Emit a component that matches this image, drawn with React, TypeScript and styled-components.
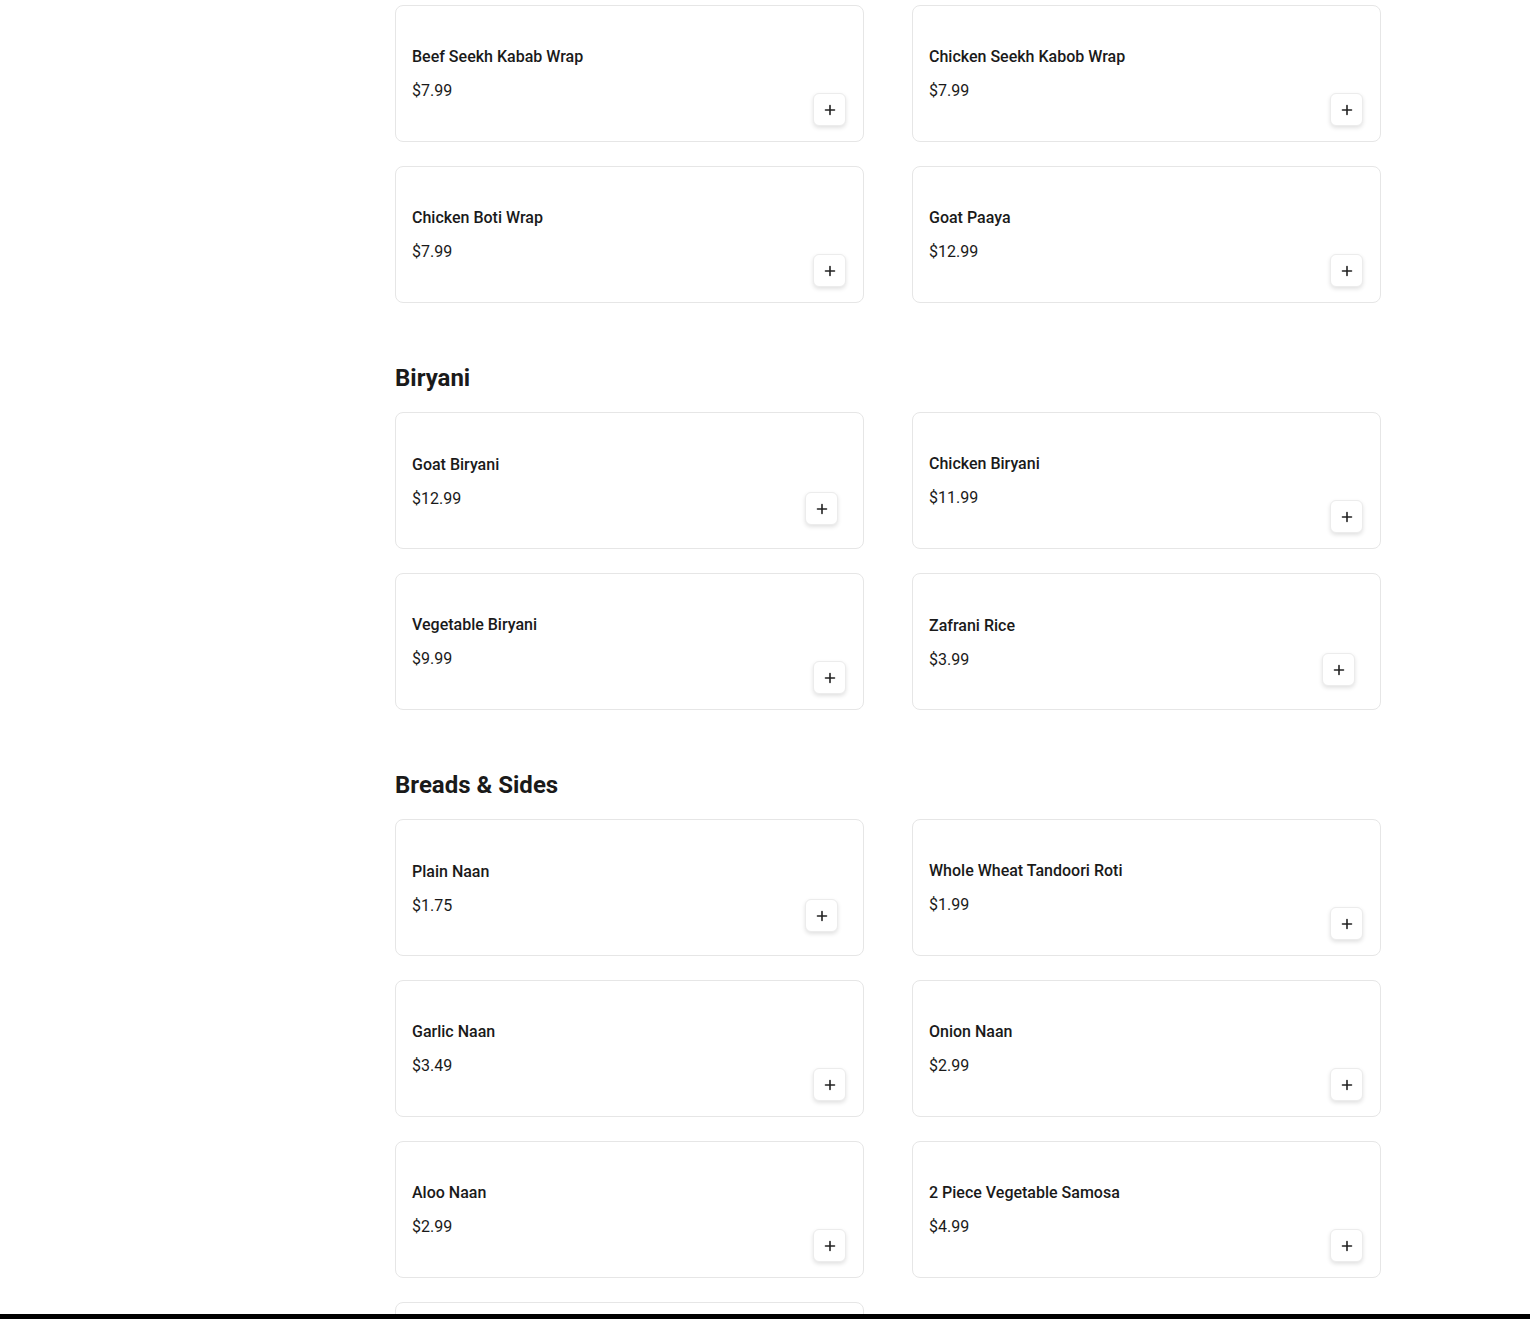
import React from "react";
import styled, { createGlobalStyle } from "styled-components";

const Global = createGlobalStyle`
  html, body { margin: 0; padding: 0; background: #fff; }
  body { font-family: Roboto, "Liberation Sans", Arial, sans-serif; color: #1a1a1a; }
  * { box-sizing: border-box; }
`;

const Page = styled.div`
  padding: 5px 0 0 395px;
  width: 1381px;
  height: 1319px;
  overflow: hidden;
`;

const Section = styled.section`
  display: flex;
  flex-direction: column;
  margin-bottom: 59px;
`;

const Heading = styled.h2`
  margin: 0 0 18px;
  font-size: 24px;
  line-height: 32px;
  font-weight: 700;
  color: #1a1a1a;
`;

const Grid = styled.div`
  display: grid;
  grid-template-columns: 469px 469px;
  column-gap: 48px;
  row-gap: 24px;
`;

const Card = styled.div`
  position: relative;
  height: 137px;
  border: 1px solid #e6e6e6;
  border-radius: 8px;
  background: #fff;
  padding: 0 17px 0 16px;
  display: flex;
  justify-content: space-between;
`;

const Info = styled.div<{ $shift?: boolean }>`
  display: flex;
  flex-direction: column;
  gap: 10px;
  padding-top: ${(p) => (p.$shift ? 40 : 39)}px;
`;

const Name = styled.div`
  font-size: 16px;
  line-height: 24px;
  font-weight: 500;
`;

const Price = styled.div`
  font-size: 16px;
  line-height: 24px;
  font-weight: 400;
`;

const AddButton = styled.button<{ $shift?: boolean }>`
  align-self: flex-end;
  margin-bottom: ${(p) => (p.$shift ? 23 : 15)}px;
  margin-right: ${(p) => (p.$shift ? 8 : 0)}px;
  width: 33px;
  height: 33px;
  border: 1px solid #ececec;
  border-radius: 6px;
  background: #fff;
  box-shadow: 0 2px 4px rgba(0, 0, 0, 0.12);
  display: flex;
  align-items: center;
  justify-content: center;
  padding: 0;
  cursor: pointer;
`;

const BottomBar = styled.div`
  position: fixed;
  left: 0;
  right: 0;
  bottom: 0;
  height: 5px;
  background: #000;
`;

const Plus = () => (
  <svg width="12" height="12" viewBox="0 0 12 12">
    <path d="M6 1.5v9M1.5 6h9" stroke="#222" strokeWidth="1.6" strokeLinecap="round" />
  </svg>
);

type Item = { name: string; price: string; shift?: boolean };

const wraps: Item[] = [
  { name: "Beef Seekh Kabab Wrap", price: "$7.99" },
  { name: "Chicken Seekh Kabob Wrap", price: "$7.99" },
  { name: "Chicken Boti Wrap", price: "$7.99" },
  { name: "Goat Paaya", price: "$12.99" },
];

const biryani: Item[] = [
  { name: "Goat Biryani", price: "$12.99", shift: true },
  { name: "Chicken Biryani", price: "$11.99" },
  { name: "Vegetable Biryani", price: "$9.99" },
  { name: "Zafrani Rice", price: "$3.99", shift: true },
];

const breads: Item[] = [
  { name: "Plain Naan", price: "$1.75", shift: true },
  { name: "Whole Wheat Tandoori Roti", price: "$1.99" },
  { name: "Garlic Naan", price: "$3.49" },
  { name: "Onion Naan", price: "$2.99" },
  { name: "Aloo Naan", price: "$2.99" },
  { name: "2 Piece Vegetable Samosa", price: "$4.99" },
];

const MenuCard = ({ item }: { item: Item }) => (
  <Card>
    <Info $shift={item.shift}>
      <Name>{item.name}</Name>
      <Price>{item.price}</Price>
    </Info>
    <AddButton $shift={item.shift} aria-label={`Add ${item.name}`}>
      <Plus />
    </AddButton>
  </Card>
);

export default function App() {
  return (
    <>
      <Global />
      <Page>
        <Section>
          <Grid>
            {wraps.map((i) => (
              <MenuCard key={i.name} item={i} />
            ))}
          </Grid>
        </Section>
        <Section>
          <Heading>Biryani</Heading>
          <Grid>
            {biryani.map((i) => (
              <MenuCard key={i.name} item={i} />
            ))}
          </Grid>
        </Section>
        <Section>
          <Heading>Breads &amp; Sides</Heading>
          <Grid>
            {breads.map((i) => (
              <MenuCard key={i.name} item={i} />
            ))}
            <Card aria-hidden="true" />
          </Grid>
        </Section>
      </Page>
      <BottomBar />
    </>
  );
}
